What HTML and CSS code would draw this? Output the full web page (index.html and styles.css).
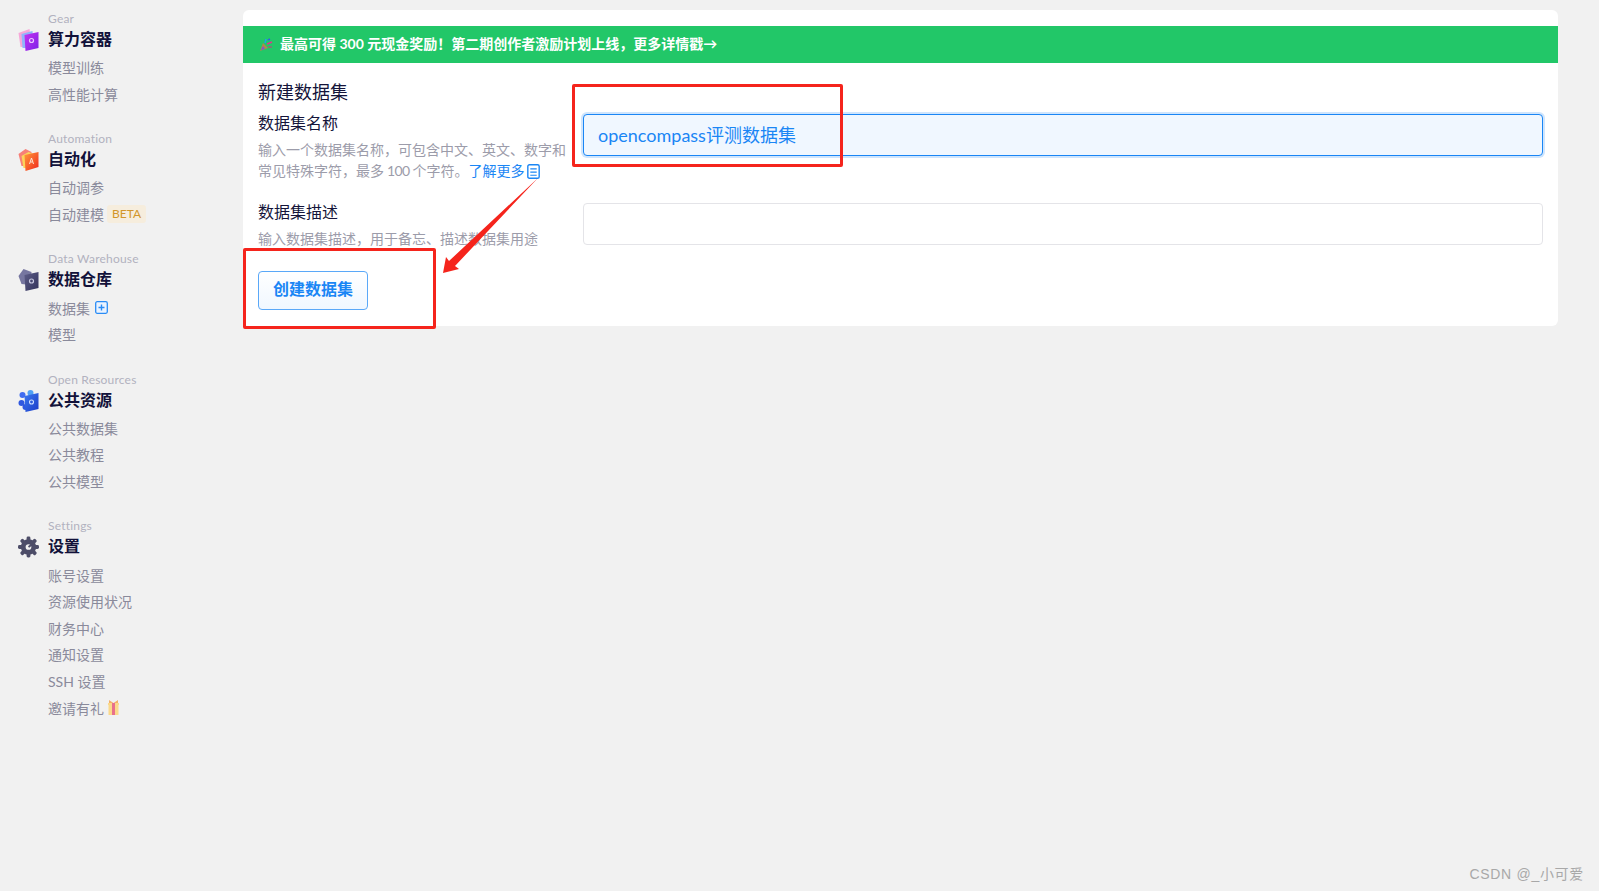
FILE: index.html
```html
<!DOCTYPE html>
<html lang="zh-CN">
<head>
    <meta charset="UTF-8">
    <meta name="viewport" content="width=device-width, initial-scale=1.0">
    <title>新建数据集</title>
    <link rel="stylesheet" href="styles.css">
</head>
<body>
    <aside class="sidebar">
        <section class="nav-group">
            <p class="nav-eyebrow">Gear</p>
            <h2 class="nav-title">
                <svg class="nav-icon" viewBox="0 0 20 22">
                    <defs><linearGradient id="g1" x1="0" y1="0" x2="1" y2="1"><stop offset="0" stop-color="#c832f0"/><stop offset="1" stop-color="#7a22e8"/></linearGradient></defs>
                    <path d="M0 4 L11 0 L13 18 L2 18 Z" fill="#f7a8d8"/>
                    <path d="M3 5 L14 2 L15 19 L4 19 Z" fill="#8fb4fa"/>
                    <path d="M6 6 L20 3 L20 19 L7 22 Z" fill="url(#g1)"/>
                    <circle cx="13" cy="11.500" r="2" fill="none" stroke="#e8c8ff" stroke-width="1.2"/>
                </svg>
                算力容器
            </h2>
            <a class="nav-item">模型训练</a>
            <a class="nav-item">高性能计算</a>
        </section>

        <section class="nav-group">
            <p class="nav-eyebrow">Automation</p>
            <h2 class="nav-title">
                <svg class="nav-icon" viewBox="0 0 20 22">
                    <defs><linearGradient id="g2" x1="0" y1="0" x2="1" y2="1"><stop offset="0" stop-color="#ff9a3a"/><stop offset="1" stop-color="#f0281e"/></linearGradient></defs>
                    <path d="M0 5 L7 0 L13 3 L13 17 L3 17 Z" fill="#f77f78"/>
                    <path d="M3 7 L10 3 L15 5 L15 19 L5 19 Z" fill="#fbd35a"/>
                    <path d="M6 6 L20 3 L20 18 L7 22 Z" fill="url(#g2)"/>
                    <path d="M11 15 L13 9 L15 15 M12 13 H14" fill="none" stroke="#ffe6d8" stroke-width="1"/>
                </svg>
                自动化
            </h2>
            <a class="nav-item">自动调参</a>
            <a class="nav-item">自动建模 <span class="badge-beta">BETA</span></a>
        </section>

        <section class="nav-group">
            <p class="nav-eyebrow">Data Warehouse</p>
            <h2 class="nav-title">
                <svg class="nav-icon" viewBox="0 0 20 22">
                    <defs><linearGradient id="g3" x1="0" y1="0" x2="1" y2="1"><stop offset="0" stop-color="#5c5c88"/><stop offset="1" stop-color="#33335a"/></linearGradient></defs>
                    <path d="M0 7 L5 0 L13 3 L12 16 L3 15 Z" fill="#7676a0"/>
                    <path d="M6 6 L20 3 L20 19 L7 22 Z" fill="url(#g3)"/>
                    <circle cx="13" cy="12" r="2" fill="none" stroke="#c8c8e0" stroke-width="1.2"/>
                </svg>
                数据仓库
            </h2>
            <a class="nav-item">数据集
                <svg class="icon-plus" viewBox="0 0 13 13"><rect x=".7" y=".7" width="11.600" height="11.600" rx="1.500" fill="#eaf3ff" stroke="#2a8cf5" stroke-width="1.300"/><path d="M6.500 3.500 V9.500 M3.500 6.500 H9.500" stroke="#2a8cf5" stroke-width="1.400"/></svg>
            </a>
            <a class="nav-item">模型</a>
        </section>

        <section class="nav-group">
            <p class="nav-eyebrow">Open Resources</p>
            <h2 class="nav-title">
                <svg class="nav-icon" viewBox="0 0 20 22">
                    <defs><linearGradient id="g4" x1="0" y1="0" x2="1" y2="1"><stop offset="0" stop-color="#3a78f0"/><stop offset="1" stop-color="#1c3cc8"/></linearGradient></defs>
                    <circle cx="4" cy="5" r="3" fill="#3f6cf0"/>
                    <circle cx="12" cy="3" r="3" fill="#4fa0f5"/>
                    <circle cx="3" cy="13" r="3" fill="#2f58e0"/>
                    <circle cx="7" cy="17" r="3" fill="#2f58e0"/>
                    <path d="M6 6 L20 3 L20 19 L7 22 Z" fill="url(#g4)"/>
                    <circle cx="13" cy="12" r="2" fill="none" stroke="#d0e0ff" stroke-width="1.100"/>
                </svg>
                公共资源
            </h2>
            <a class="nav-item">公共数据集</a>
            <a class="nav-item">公共教程</a>
            <a class="nav-item">公共模型</a>
        </section>

        <section class="nav-group">
            <p class="nav-eyebrow">Settings</p>
            <h2 class="nav-title">
                <svg class="nav-icon" viewBox="0 0 22 22">
                    <g fill="#4d4d68">
                        <circle cx="11" cy="11" r="8"/>
                        <rect x="9" y="0" width="4" height="22" rx="1.500"/>
                        <rect x="9" y="0" width="4" height="22" rx="1.500" transform="rotate(45 11 11)"/>
                        <rect x="9" y="0" width="4" height="22" rx="1.500" transform="rotate(90 11 11)"/>
                        <rect x="9" y="0" width="4" height="22" rx="1.500" transform="rotate(135 11 11)"/>
                    </g>
                    <circle cx="11" cy="11" r="3" fill="#f1f1f1"/>
                    <path d="M11 11 L15 8" stroke="#4d4d68" stroke-width="2"/>
                </svg>
                设置
            </h2>
            <a class="nav-item">账号设置</a>
            <a class="nav-item">资源使用状况</a>
            <a class="nav-item">财务中心</a>
            <a class="nav-item">通知设置</a>
            <a class="nav-item">SSH 设置</a>
            <a class="nav-item">邀请有礼
                <svg class="icon-gift" viewBox="0 0 13 15"><path d="M1 3 H12 V5 H11.500 V15 H1.500 V5 H1 Z" fill="#fbd98a"/><rect x="5" y="3" width="3" height="12" fill="#e8708c"/><path d="M2 0 L6.500 3 L11 0 L11 3 H2 Z" fill="#f4b06a"/></svg>
            </a>
        </section>
    </aside>

    <main class="content">
        <div class="card">
            <div class="banner">
                <svg class="icon-party" viewBox="0 0 14 14">
                    <path d="M1 13 L4 5 L9 10 Z" fill="#b08a4a"/>
                    <path d="M2 12 L4 8 L6 11 Z" fill="#7a5ad0"/>
                    <path d="M6 5 L7 1" stroke="#22a0e8" stroke-width="1.500"/>
                    <path d="M8 6 L13 4" stroke="#e8308c" stroke-width="1.500"/>
                    <path d="M9 2 L11 1" stroke="#3060e0" stroke-width="1.500"/>
                    <path d="M9 9 L13 9" stroke="#d03080" stroke-width="1"/>
                </svg>
                <span class="banner-text">最高可得 300 元现金奖励！第二期创作者激励计划上线，更多详情戳→</span>
            </div>

            <form class="form">
                <h1 class="form-title">新建数据集</h1>

                <div class="form-row">
                    <div class="form-info">
                        <label class="form-label" for="ds-name">数据集名称</label>
                        <p class="form-help">输入一个数据集名称，可包含中文、英文、数字和常见特殊字符，最多 <span class="help-num">100</span> 个字符。<a class="help-link">了解更多<svg class="icon-doc" viewBox="0 0 12 14"><rect x=".7" y=".7" width="10.600" height="12.600" rx="1.500" fill="none" stroke="#1a86f5" stroke-width="1.300"/><path d="M3 4.500 H9 M3 7.500 H9 M3 10.500 H9" stroke="#1a86f5" stroke-width="1.100"/></svg></a></p>
                    </div>
                    <input class="form-input is-focused" id="ds-name" type="text" value="opencompass评测数据集">
                </div>

                <div class="form-row">
                    <div class="form-info">
                        <label class="form-label" for="ds-desc">数据集描述</label>
                        <p class="form-help">输入数据集描述，用于备忘、描述数据集用途</p>
                    </div>
                    <input class="form-input" id="ds-desc" type="text">
                </div>

                <button class="btn-create" type="button">创建数据集</button>
            </form>
        </div>
    </main>

    <!-- annotations drawn over the screenshot -->
    <div class="mark mark-input"></div>
    <div class="mark mark-button"></div>
    <svg class="mark-arrow" viewBox="0 0 1599 891">
        <path d="M538 178 L449 261 L446 257 L443 273 L459 269 L455 266 Z" fill="#f5241c"/>
    </svg>

    <div class="watermark">CSDN @_小可爱</div>
</body>
</html>
```

FILE: styles.css
```css
* {
    margin: 0;
    padding: 0;
    box-sizing: border-box;
}

html, body {
    height: 100%;
    overflow: hidden;
}

body {
    position: relative;
    display: flex;
    font-family: 'Lato', 'Noto Sans CJK SC', sans-serif;
    background-color: #f1f1f1;
    color: #14143a;
}

.sidebar {
    width: 243px;
    flex-shrink: 0;
    padding: 11px 0 0 48px;
    display: flex;
    flex-direction: column;
    gap: 24px;
}

.nav-eyebrow {
    font-size: 12px;
    line-height: 16px;
    letter-spacing: 0.2px;
    color: #b2b2bf;
}

.nav-title {
    position: relative;
    font-size: 16px;
    font-weight: 600;
    line-height: 24px;
    margin-bottom: 3px;
    color: #12123a;
}

.nav-icon {
    position: absolute;
    left: -30px;
    top: 2px;
    width: 21px;
    height: 22px;
}

.nav-item {
    display: flex;
    align-items: center;
    gap: 4px;
    height: 26.600px;
    font-size: 14px;
    color: #8a8a9b;
}

.badge-beta {
    display: inline-block;
    margin-left: -1px;
    padding: 0 5px;
    height: 18px;
    line-height: 18px;
    font-size: 12px;
    border-radius: 3px;
    color: #d2962a;
    background-color: #f6eddd;
}

.icon-plus {
    width: 13px;
    height: 13px;
    margin-left: 1px;
}

.icon-gift {
    width: 13px;
    height: 15px;
    margin-left: -1px;
}

.content {
    flex: 1;
    padding: 10px 41px 0 0;
}

.card {
    background-color: #ffffff;
    border-radius: 6px;
    padding: 16px 0;
}

.banner {
    display: flex;
    align-items: center;
    gap: 7px;
    height: 37px;
    padding-left: 16px;
    background-color: #22c768;
    color: #ffffff;
    font-size: 14px;
    font-weight: 700;
}

.banner-text {
    line-height: 20px;
    margin-top: -2px;
}

.icon-party {
    width: 14px;
    height: 14px;
}

.form {
    padding: 17px 15px 0;
}

.form-title {
    font-size: 18px;
    font-weight: 400;
    line-height: 24px;
    margin-bottom: 8px;
}

.form-row {
    display: grid;
    grid-template-columns: 310px 1fr;
    column-gap: 15px;
    align-items: start;
    margin-bottom: 20px;
}

.form-label {
    display: block;
    font-size: 16px;
    line-height: 22px;
    margin-bottom: 5px;
}

.form-help {
    font-size: 14px;
    line-height: 21px;
    word-spacing: -0.500px;
    color: #9c9caa;
}

.help-num {
    letter-spacing: -0.700px;
}

.help-link {
    color: #1a86f5;
}

.icon-doc {
    width: 13px;
    height: 15px;
    margin-left: 3px;
    vertical-align: -3px;
}

.form-input {
    width: 100%;
    height: 42px;
    margin-top: 2px;
    padding: 0 14px 2px;
    font-family: inherit;
    font-size: 18px;
    color: #1a86f5;
    background-color: #ffffff;
    border: 1px solid #e4e4e8;
    border-radius: 4px;
    outline: none;
}

.form-input.is-focused {
    background-color: #f0f7ff;
    border-color: #1a86f5;
    box-shadow: 0 0 0 2px #cfe5fd;
}

.btn-create {
    display: block;
    margin-top: 22px;
    width: 110px;
    height: 39px;
    padding-bottom: 5px;
    font-family: inherit;
    font-size: 16px;
    font-weight: 600;
    color: #1a86f5;
    background: linear-gradient(#ffffff, #f0f7ff);
    border: 1px solid #5aa8f8;
    border-radius: 4px;
}

.mark {
    position: absolute;
    border: 3px solid #f5241c;
    border-radius: 2px;
}

.mark-input {
    left: 572px;
    top: 84px;
    width: 271px;
    height: 83px;
}

.mark-button {
    left: 243px;
    top: 248px;
    width: 193px;
    height: 81px;
}

.mark-arrow {
    position: absolute;
    left: 0;
    top: 0;
    width: 1599px;
    height: 891px;
    pointer-events: none;
}

.watermark {
    position: absolute;
    right: 15px;
    bottom: 8px;
    font-family: 'Liberation Sans', 'Noto Sans CJK SC', sans-serif;
    font-size: 14px;
    letter-spacing: 0.7px;
    color: #a8a8a8;
}
```
